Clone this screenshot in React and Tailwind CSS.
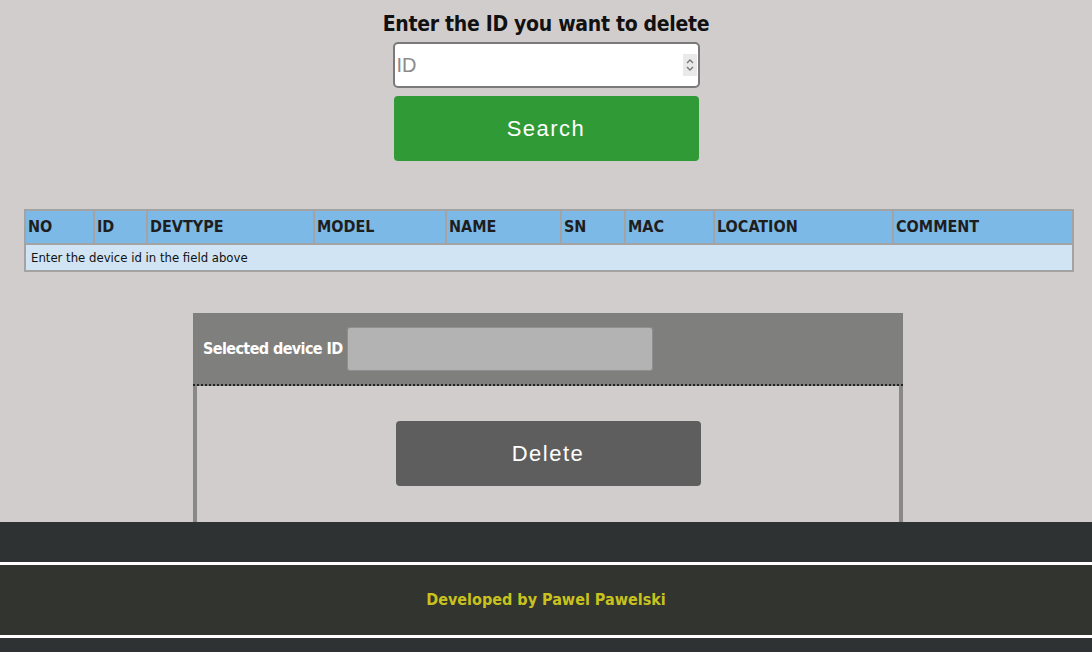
import React, { useState } from "react";

const cols = [
  ["NO", "w-[69px]"],
  ["ID", "w-[53px]"],
  ["DEVTYPE", "w-[167px]"],
  ["MODEL", "w-[132px]"],
  ["NAME", "w-[115px]"],
  ["SN", "w-[64px]"],
  ["MAC", "w-[89px]"],
  ["LOCATION", "w-[179px]"],
  ["COMMENT", "w-[180px]"],
];

export default function App() {
  const [id, setId] = useState("");

  return (
    <div className="min-h-[652px] bg-[#d1cdcc] overflow-hidden font-['DejaVu_Sans_Condensed','DejaVu_Sans',sans-serif]">
      {/* search form */}
      <div className="flex flex-col items-center pt-[9px]">
        <h2 className="text-[21px] leading-[30px] font-bold text-[#111] tracking-[-0.3px]">
          Enter the ID you want to delete
        </h2>
        <div className="relative mt-[3px]">
          <input
            type="number"
            placeholder="ID"
            value={id}
            onChange={(e) => setId(e.target.value)}
            className="w-[307px] h-[46px] bg-white border-2 border-[#7a7a7a] rounded-[5px] px-[2px] text-[20px] text-[#333] placeholder:text-[#8a8a8a] outline-none font-['Liberation_Sans',Arial,sans-serif]"
          />
          <div className="absolute right-[3px] top-[12px] w-[14px] h-[22px] bg-[#e9e9e9] flex flex-col items-center justify-center">
            <svg width="10" height="18" viewBox="0 0 10 18" fill="none" stroke="#777" strokeWidth="1.4">
              <path d="M2 7 L5 4 L8 7" />
              <path d="M2 11 L5 14 L8 11" />
            </svg>
          </div>
        </div>
        <button className="mt-[8px] w-[305px] h-[65px] bg-[#309a36] rounded-[4px] text-white text-[22px] tracking-[1.5px] font-['Liberation_Sans',Arial,sans-serif]">
          Search
        </button>
      </div>

      {/* result table */}
      <table className="mt-[48px] ml-[24px] w-[1048px] table-fixed border-collapse border-2 border-[#a3a3a3]">
        <thead>
          <tr className="bg-[#7db9e6] h-[34px]">
            {cols.map(([c, w]) => (
              <th
                key={c}
                className={`${w} border-2 border-[#a3a3a3] text-left px-[2px] text-[16px] font-bold text-[#1e1e1e]`}
              >
                {c}
              </th>
            ))}
          </tr>
        </thead>
        <tbody>
          <tr className="bg-[#d0e4f3] h-[27px]">
            <td colSpan={9} className="px-[5px] text-[13px] text-[#111]">
              Enter the device id in the field above
            </td>
          </tr>
        </tbody>
      </table>

      {/* delete panel */}
      <div className="mt-[41px] ml-[193px] w-[710px]">
        <div className="bg-[#7f807e] h-[73px] flex items-center px-[10px] gap-[4px] border-b-2 border-dotted border-[#222]">
          <span className="text-white text-[16px] font-bold tracking-[-0.6px]">Selected device ID</span>
          <input
            readOnly
            className="w-[306px] h-[44px] bg-[#b3b3b3] border border-[#8f8f8f] rounded-[3px] outline-none"
          />
        </div>
        <div className="h-[200px] border-x-4 border-[#888] flex justify-center pt-[35px]">
          <button className="w-[305px] h-[65px] bg-[#5e5e5e] rounded-[4px] text-white text-[22px] tracking-[1.5px] font-['Liberation_Sans',Arial,sans-serif]">
            Delete
          </button>
        </div>
      </div>

      {/* footer */}
      <footer className="fixed bottom-0 left-0 right-0 h-[130px] bg-[#2f3233] flex flex-col">
        <div className="h-[40px]" />
        <div className="h-[76px] bg-[#31342f] border-y-[3px] border-white flex items-center justify-center">
          <span className="text-[#c9c21e] text-[16px] font-bold">Developed by Pawel Pawelski</span>
        </div>
      </footer>
    </div>
  );
}
